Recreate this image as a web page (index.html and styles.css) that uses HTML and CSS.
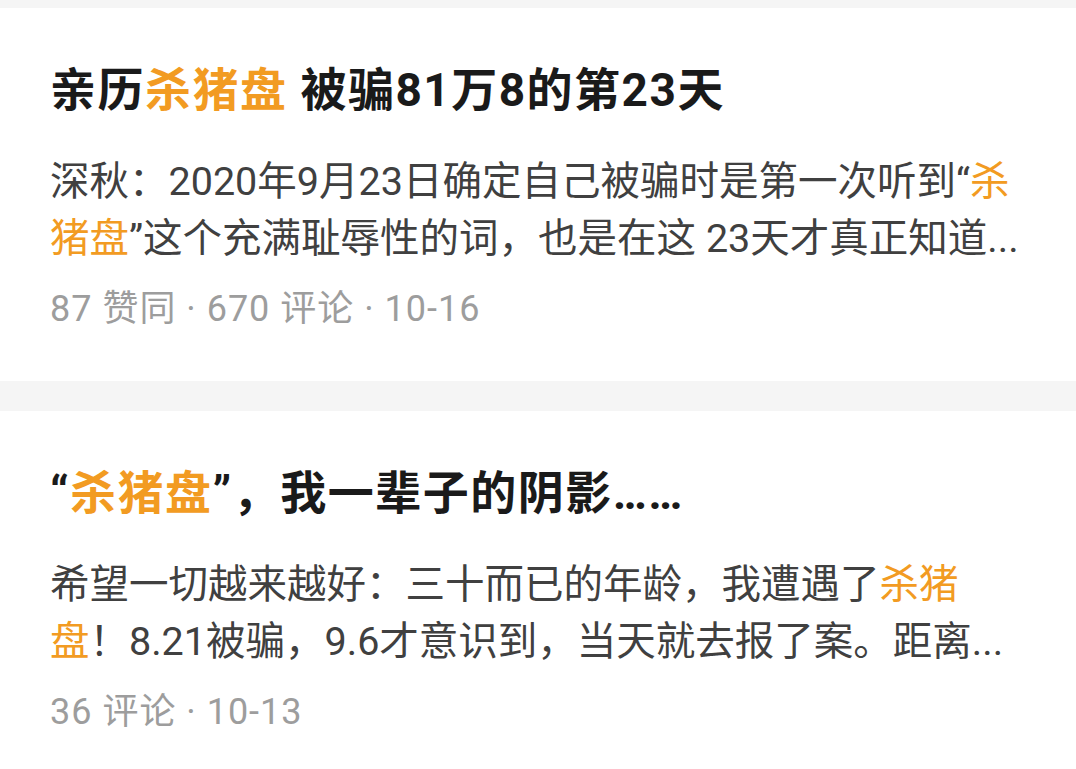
FILE: index.html
```html
<!DOCTYPE html>
<html lang="zh-CN">
<head>
    <meta charset="UTF-8">
    <meta name="viewport" content="width=device-width, initial-scale=1.0">
    <title>搜索结果</title>
    <link rel="stylesheet" href="styles.css">
</head>
<body>
    <div class="feed">
        <div class="card">
            <h2 class="card-title">亲历<em>杀猪盘</em> 被骗81万8的第23天</h2>
            <p class="card-excerpt">深秋：2020年9月23日确定自己被骗时是第一次听到“<em>杀</em><br><em>猪盘</em>”这个充满耻辱性的词，也是在这 23天才真正知道...</p>
            <div class="card-meta">87 赞同 · 670 评论 · 10-16</div>
        </div>

        <div class="card">
            <h2 class="card-title">“<em>杀猪盘</em>”，我一辈子的阴影……</h2>
            <p class="card-excerpt">希望一切越来越好：三十而已的年龄，我遭遇了<em>杀猪</em><br><em>盘</em>！8.21被骗，9.6才意识到，当天就去报了案。距离...</p>
            <div class="card-meta">36 评论 · 10-13</div>
        </div>
    </div>
</body>
</html>
```

FILE: styles.css
```css
body {
    margin: 0;
    background: #f5f5f5;
    font-family: Roboto, "Noto Sans CJK SC", sans-serif;
    overflow: hidden;
}

.feed {
    padding-top: 8px;
    display: flex;
    flex-direction: column;
    gap: 30px;
}

.card {
    background: #ffffff;
    padding: 52px 20px 47px 50px;
}

.card em {
    font-style: normal;
    color: #f29b22;
}

.card-title {
    margin: 0;
    font-size: 46px;
    line-height: 60px;
    font-weight: 700;
    letter-spacing: 1.5px;
    color: #1a1a1a;
}

.card-excerpt {
    margin: 33px 0 0;
    font-size: 39.5px;
    line-height: 57px;
    color: #404040;
    white-space: nowrap;
}

.card-meta {
    margin-top: 17px;
    font-size: 36px;
    line-height: 50px;
    letter-spacing: 1px;
    color: #9d9d9d;
}
```
